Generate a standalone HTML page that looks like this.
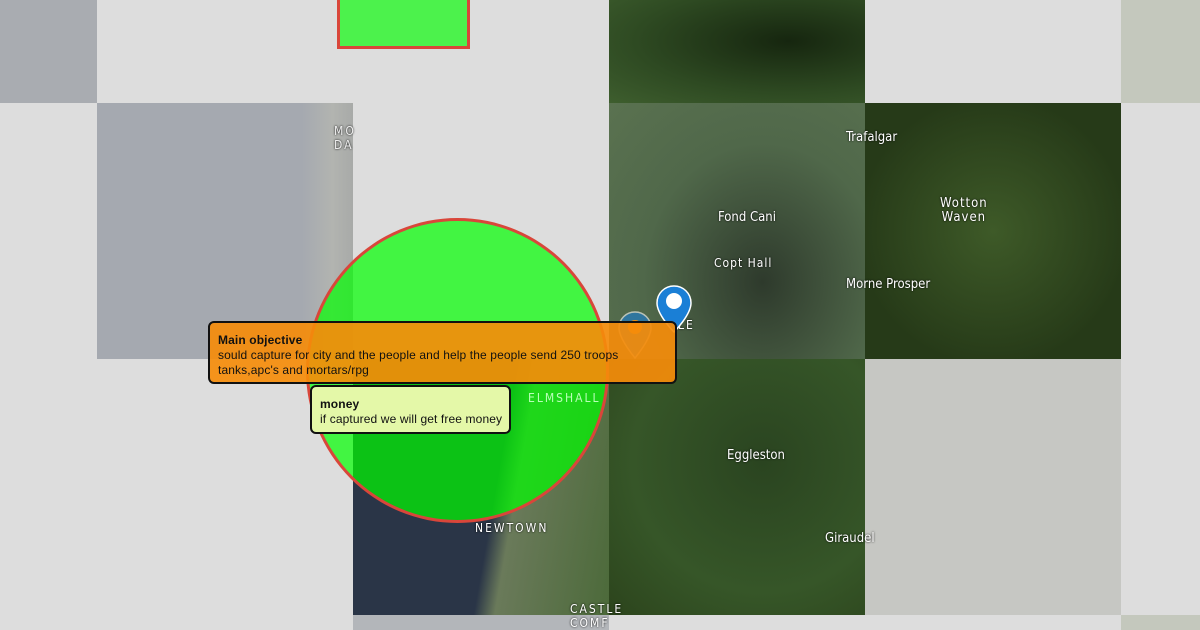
<!DOCTYPE html>
<html><head><style>
body{margin:0;width:1200px;height:630px;overflow:hidden;background:#dddddd;position:relative;font-family:"Liberation Sans",sans-serif}
.t{position:absolute}
.l{position:absolute;color:#fff;font-size:13px;text-shadow:0 0 2px #000;font-family:"DejaVu Sans Condensed","Liberation Sans",sans-serif}
.box{position:absolute;border:2px solid #111;border-radius:6px;font-size:12px;line-height:15px;padding:8px 8px;box-sizing:border-box;color:#111;letter-spacing:0.12px;white-space:nowrap}
</style></head><body>
<div class="t" style="left:0;top:0;width:97px;height:103px;background:#a9acb1"></div>
<div class="t" style="left:97px;top:103px;width:256px;height:256px;background:linear-gradient(90deg,#a5a9b0 80%,#b2b4b0 92%,#a8aaa8)"></div>
<div class="t" style="left:609px;top:0;width:256px;height:103px;background:radial-gradient(ellipse at 70% 40%,#16260f,#2e4a22 60%,#3e5e2e)"></div>
<div class="t" style="left:1121px;top:0;width:79px;height:103px;background:#c4c8bd"></div>
<div class="t" style="left:609px;top:103px;width:256px;height:256px;background:radial-gradient(ellipse at 60% 70%,#2e3a2c,#50684a 55%,#5a7250)"></div>
<div class="t" style="left:865px;top:103px;width:256px;height:256px;background:radial-gradient(ellipse at 50% 50%,#3e5a28,#263a18 75%)"></div>
<div class="t" style="left:353px;top:359px;width:256px;height:256px;background:linear-gradient(100deg,#2a3547 55%,#6a7a5a 62%,#4c6a3a)"></div>
<div class="t" style="left:609px;top:359px;width:256px;height:256px;background:radial-gradient(ellipse at 60% 40%,#2a4420,#365628 60%,#2c441c)"></div>
<div class="t" style="left:865px;top:359px;width:256px;height:256px;background:#c6c7c3"></div>
<div class="t" style="left:353px;top:615px;width:256px;height:15px;background:#b3b6ba"></div>
<div class="t" style="left:1121px;top:615px;width:79px;height:15px;background:#c4c8bd"></div>

<div class="t" style="left:337px;top:-4px;background:#4cf24c;border:3px solid #d9463a;box-sizing:border-box;width:133px;height:53px"></div>
<div class="t" style="left:306px;top:218px;width:303px;height:305px;border-radius:50%;background:rgba(0,255,0,0.7);border:3px solid #d9463a;box-sizing:border-box"></div>

<div class="l" style="left:846px;top:130px">Trafalgar</div>
<div class="l" style="left:940px;top:197px;text-align:center;line-height:14px;letter-spacing:1px">Wotton<br>Waven</div>
<div class="l" style="left:718px;top:210px">Fond Cani</div>
<div class="l" style="left:714px;top:256px;font-size:12px;letter-spacing:1px">Copt Hall</div>
<div class="l" style="left:846px;top:277px">Morne Prosper</div>
<div class="l" style="left:727px;top:448px">Eggleston</div>
<div class="l" style="left:825px;top:531px">Giraudel</div>
<div class="l" style="left:475px;top:521px;font-size:12px;letter-spacing:2px">NEWTOWN</div>
<div class="l" style="left:570px;top:602px;font-size:12px;letter-spacing:2px;line-height:14px">CASTLE<br>COMF</div>
<div class="l" style="left:334px;top:124px;font-size:12px;letter-spacing:2px;line-height:14px;color:#eee">MO<br>DA</div>
<div class="l" style="left:528px;top:391px;font-size:12px;letter-spacing:2px;color:#b8ffb8;text-shadow:none">ELMSHALL</div>
<div class="l" style="left:678px;top:318px;font-size:12px;letter-spacing:2px">LE</div>

<svg class="t" style="left:617px;top:310px" width="36" height="50" viewBox="0 0 36 50"><path d="M18 2C9 2 2 9 2 18c0 11 16 30 16 30s16-19 16-30C34 9 27 2 18 2z" fill="#1a7fd6" stroke="#fff" stroke-width="1.5" opacity=".6"/><circle cx="18" cy="17" r="7" fill="#f0900f"/></svg>
<svg class="t" style="left:655px;top:284px" width="38" height="50" viewBox="0 0 38 50"><path d="M19 2C10 2 2 9 2 19c0 12 17 29 17 29s17-17 17-29C36 9 28 2 19 2z" fill="#1a7fd6" stroke="#fff" stroke-width="1.5"/><circle cx="19" cy="17" r="8" fill="#fff"/></svg>

<div class="box" style="left:208px;top:321px;width:469px;height:63px;background:rgba(245,140,10,0.92);padding-top:10px"><b>Main objective</b><br>sould capture for city and the people and help the people send 250 troops<br>tanks,apc's and mortars/rpg</div>
<div class="box" style="left:310px;top:385px;width:201px;height:49px;background:#e4f8a8;padding-top:10px"><b>money</b><br>if captured we will get free money</div>
</body></html>
